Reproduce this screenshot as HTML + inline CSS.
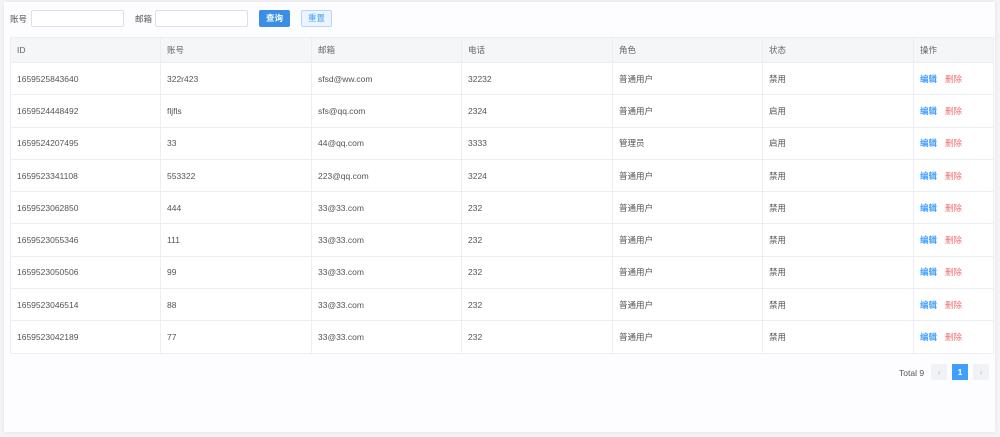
<!DOCTYPE html><html><head><meta charset="utf-8"><style>
body{margin:0;width:1000px;height:437px;background:#f4f4f6;font-family:"Liberation Sans","Noto Sans CJK SC",sans-serif;font-size:8.5px;color:#555;position:relative;overflow:hidden}
.card{position:absolute;left:4px;top:2px;width:991px;height:430px;background:#fdfcff;box-shadow:0 0 4px rgba(0,0,0,.08)}
.abs{position:absolute}
.inp{position:absolute;top:10px;height:17px;border:1px solid #dcdfe6;border-radius:2px;background:#fff;box-sizing:border-box}
table{position:absolute;left:10px;top:37px;border-collapse:collapse;table-layout:fixed;width:983px}
td{border:1px solid #ebeef5;padding:0 6px;height:32.3px;box-sizing:border-box;white-space:nowrap;background:#fff}
tr.h td{background:#f5f6f8;height:25px;color:#666}
.b{color:#409eff;font-weight:bold;margin-right:8px}.r{color:#f56c6c}
</style></head><body><div class="card"></div>
<div class="abs" style="left:10px;top:13px">账号</div>
<div class="inp" style="left:31px;width:93px"></div>
<div class="abs" style="left:135px;top:13px">邮箱</div>
<div class="inp" style="left:155px;width:93px"></div>
<div class="abs" style="left:259px;top:10px;width:31px;height:17px;background:#3a8ee6;border-radius:2px;color:#fff;font-weight:bold;text-align:center;line-height:17px">查询</div>
<div class="abs" style="left:301px;top:10px;width:31px;height:17px;background:#ecf5ff;border:1px solid #b3d8ff;box-sizing:border-box;border-radius:2px;color:#409eff;text-align:center;line-height:15px">重置</div>
<table>
<colgroup><col style="width:150px"><col style="width:151px"><col style="width:150px"><col style="width:151px"><col style="width:150px"><col style="width:151px"><col style="width:80px"></colgroup>
<tr class="h"><td>ID</td><td>账号</td><td>邮箱</td><td>电话</td><td>角色</td><td>状态</td><td>操作</td></tr>
<tr><td>1659525843640</td><td>322r423</td><td>sfsd@ww.com</td><td>32232</td><td>普通用户</td><td>禁用</td><td><span class="b">编辑</span><span class="r">删除</span></td></tr>
<tr><td>1659524448492</td><td>fljfls</td><td>sfs@qq.com</td><td>2324</td><td>普通用户</td><td>启用</td><td><span class="b">编辑</span><span class="r">删除</span></td></tr>
<tr><td>1659524207495</td><td>33</td><td>44@qq.com</td><td>3333</td><td>管理员</td><td>启用</td><td><span class="b">编辑</span><span class="r">删除</span></td></tr>
<tr><td>1659523341108</td><td>553322</td><td>223@qq.com</td><td>3224</td><td>普通用户</td><td>禁用</td><td><span class="b">编辑</span><span class="r">删除</span></td></tr>
<tr><td>1659523062850</td><td>444</td><td>33@33.com</td><td>232</td><td>普通用户</td><td>禁用</td><td><span class="b">编辑</span><span class="r">删除</span></td></tr>
<tr><td>1659523055346</td><td>111</td><td>33@33.com</td><td>232</td><td>普通用户</td><td>禁用</td><td><span class="b">编辑</span><span class="r">删除</span></td></tr>
<tr><td>1659523050506</td><td>99</td><td>33@33.com</td><td>232</td><td>普通用户</td><td>禁用</td><td><span class="b">编辑</span><span class="r">删除</span></td></tr>
<tr><td>1659523046514</td><td>88</td><td>33@33.com</td><td>232</td><td>普通用户</td><td>禁用</td><td><span class="b">编辑</span><span class="r">删除</span></td></tr>
<tr><td>1659523042189</td><td>77</td><td>33@33.com</td><td>232</td><td>普通用户</td><td>禁用</td><td><span class="b">编辑</span><span class="r">删除</span></td></tr>
</table>
<div class="abs" style="left:899px;top:368px">Total 9</div>
<div class="abs" style="left:931px;top:364px;width:16px;height:16px;background:#f0f2f5;color:#bbb;text-align:center;line-height:16px">‹</div>
<div class="abs" style="left:952px;top:364px;width:16px;height:16px;background:#409eff;color:#fff;font-weight:bold;text-align:center;line-height:16px">1</div>
<div class="abs" style="left:973px;top:364px;width:16px;height:16px;background:#f0f2f5;color:#bbb;text-align:center;line-height:16px">›</div>
</body></html>
